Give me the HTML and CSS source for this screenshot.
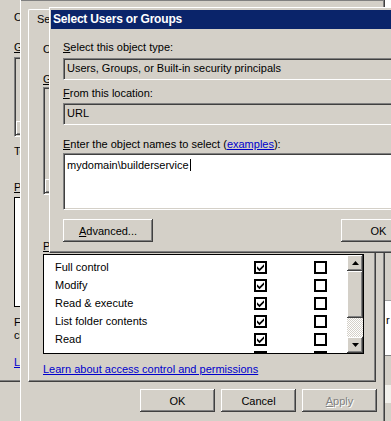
FILE: index.html
```html
<!DOCTYPE html>
<html lang="en">
<head>
    <meta charset="UTF-8">
    <title>Select Users or Groups</title>
    <link rel="stylesheet" href="styles.css">
</head>
<body>
    <div class="desktop">
        <!-- Back properties window -->
        <div class="win win-back">
            <div class="back-main">
                <div class="panel back-panel">
                    <p class="line">Object name:&nbsp; C:\Builds</p>
                    <p class="line grp-label"><u>G</u>roup or user names:</p>
                    <div class="grp-list back-grp">
                        <div class="hscroll"><span class="raised hbtn"></span></div>
                    </div>
                    <p class="line back-note">To change permissions, click Edit.</p>
                    <p class="line back-perm-label"><u>P</u>ermissions for Administrators</p>
                    <div class="perm-list back-perm"></div>
                    <p class="line back-adv">For special permissions or advanced settings,<br>click Advanced.</p>
                    <a class="link back-link" href="#">Learn about access control and permissions</a>
                </div>
            </div>
            <div class="back-edge">
                <div class="edge-field"></div>
                <div class="edge-box">r</div>
                <div class="edge-pale"></div>
            </div>
        </div>

        <!-- Folder properties window, Security tab -->
        <div class="win win-mid">
            <div class="mid-rule"></div>
            <div class="tabs"><div class="tab">Security</div></div>
            <div class="panel mid-panel">
                <p class="line">Object name:&nbsp; C:\Builds\Drop</p>
                <p class="line grp-label"><u>G</u>roup or user names:</p>
                <div class="grp-list mid-grp">
                    <div class="hscroll"><span class="raised hbtn"></span></div>
                </div>
                <p class="line perm-label"><u>P</u>ermissions for Administrators</p>
                <div class="perm-list">
                    <div class="perm-rows">
                        <div class="perm-row"><span>Full control</span><i class="cb on"><svg width="9" height="9" viewBox="0 0 9 9"><polygon points="1,3.2 3.5,5.7 8,1.2 8,3.7 3.5,8.2 1,5.7"/></svg></i><i class="cb"></i></div>
                        <div class="perm-row"><span>Modify</span><i class="cb on"><svg width="9" height="9" viewBox="0 0 9 9"><polygon points="1,3.2 3.5,5.7 8,1.2 8,3.7 3.5,8.2 1,5.7"/></svg></i><i class="cb"></i></div>
                        <div class="perm-row"><span>Read &amp; execute</span><i class="cb on"><svg width="9" height="9" viewBox="0 0 9 9"><polygon points="1,3.2 3.5,5.7 8,1.2 8,3.7 3.5,8.2 1,5.7"/></svg></i><i class="cb"></i></div>
                        <div class="perm-row"><span>List folder contents</span><i class="cb on"><svg width="9" height="9" viewBox="0 0 9 9"><polygon points="1,3.2 3.5,5.7 8,1.2 8,3.7 3.5,8.2 1,5.7"/></svg></i><i class="cb"></i></div>
                        <div class="perm-row"><span>Read</span><i class="cb on"><svg width="9" height="9" viewBox="0 0 9 9"><polygon points="1,3.2 3.5,5.7 8,1.2 8,3.7 3.5,8.2 1,5.7"/></svg></i><i class="cb"></i></div>
                        <div class="perm-row"><span>Write</span><i class="cb on"><svg width="9" height="9" viewBox="0 0 9 9"><polygon points="1,3.2 3.5,5.7 8,1.2 8,3.7 3.5,8.2 1,5.7"/></svg></i><i class="cb"></i></div>
                    </div>
                    <div class="vscroll">
                        <div class="raised sb-btn"><svg width="7" height="4" viewBox="0 0 7 4"><polygon points="3.5,0 7,4 0,4"/></svg></div>
                        <div class="raised sb-thumb"></div>
                        <div class="sb-track"></div>
                        <div class="raised sb-btn"><svg width="7" height="4" viewBox="0 0 7 4"><polygon points="0,0 7,0 3.5,4"/></svg></div>
                    </div>
                </div>
                <a class="link mid-link" href="#">Learn about access control and permissions</a>
            </div>
            <div class="buttons">
                <button class="btn">OK</button>
                <button class="btn">Cancel</button>
                <button class="btn" disabled><u>A</u>pply</button>
            </div>
        </div>

        <!-- Select Users or Groups dialog -->
        <div class="win win-dialog">
            <div class="titlebar">Select Users or Groups</div>
            <div class="dlg-body">
                <p class="line"><u>S</u>elect this object type:</p>
                <div class="field readonly type-field">Users, Groups, or Built-in security principals</div>
                <p class="line loc-label"><u>F</u>rom this location:</p>
                <div class="field readonly loc-field">URL</div>
                <p class="line names-label"><u>E</u>nter the object names to select (<a href="#">examples</a>):</p>
                <div class="field names">mydomain\builderservice<span class="caret"></span></div>
                <div class="dlg-buttons">
                    <button class="btn btn-wide"><u>A</u>dvanced...</button>
                    <button class="btn">OK</button>
                </div>
            </div>
        </div>
    </div>
</body>
</html>
```

FILE: styles.css
```css
/* General styles */
html, body {
    margin: 0;
    padding: 0;
}

body {
    width: 391px;
    height: 421px;
    overflow: hidden;
    background-color: #d4d0c8;
    font-family: "Liberation Sans", Arial, sans-serif;
    font-size: 11px;
    color: #000;
}

.desktop {
    position: relative;
    width: 391px;
    height: 421px;
    overflow: hidden;
}

.win {
    box-sizing: border-box;
    background-color: #d4d0c8;
}

.line {
    margin: 0;
    line-height: 13px;
    white-space: nowrap;
}

a {
    color: #0000cc;
    text-decoration: underline;
}

.link {
    display: block;
    line-height: 13px;
    white-space: nowrap;
}

/* 3D bevels */
.raised {
    background-color: #d4d0c8;
    box-shadow: inset -1px -1px #404040, inset 1px 1px #fff, inset -2px -2px #808080, inset 2px 2px #d4d0c8;
}

.btn {
    box-sizing: border-box;
    width: 75px;
    height: 23px;
    padding: 0;
    border: none;
    font: inherit;
    color: #000;
    background-color: #d4d0c8;
    box-shadow: inset -1px -1px #404040, inset 1px 1px #fff, inset -2px -2px #808080, inset 2px 2px #d4d0c8;
}

.btn:disabled {
    color: #808080;
    text-shadow: 1px 1px #fff;
}

.btn-wide {
    width: 90px;
}

.panel {
    box-sizing: border-box;
    border-left: 1px solid #fff;
    border-right: 1px solid #404040;
    border-bottom: 1px solid #404040;
    box-shadow: inset -1px -1px #808080;
}

/* Group list (mostly hidden) */
.grp-list {
    box-sizing: border-box;
    display: flex;
    flex-direction: column;
    width: 320px;
    border: 1px solid;
    border-color: #808080 #fff #fff #808080;
    box-shadow: inset 1px 1px #404040, inset -1px -1px #d4d0c8;
    background-color: #d4d0c8;
}

.hscroll {
    margin-top: auto;
    padding: 0 1px 1px 1px;
}

.hbtn {
    display: block;
    width: 16px;
    height: 14px;
}

/* Permission list */
.perm-list {
    box-sizing: border-box;
    display: flex;
    width: 321px;
    height: 100px;
    border: 1px solid #000;
    background-color: #fff;
}

.perm-rows {
    flex: 1;
    padding-top: 3px;
    overflow: hidden;
}

.perm-row {
    display: grid;
    grid-template-columns: 199px 60px 1fr;
    align-items: center;
    height: 18px;
    padding-left: 11px;
    white-space: nowrap;
}

.cb {
    display: block;
    box-sizing: border-box;
    width: 13px;
    height: 13px;
    border: 2px solid #000;
    background-color: #fff;
}

.cb svg {
    display: block;
}

.vscroll {
    display: flex;
    flex-direction: column;
    width: 16px;
}

.sb-btn {
    display: flex;
    align-items: center;
    justify-content: center;
    height: 16px;
}

.sb-btn svg {
    display: block;
}

.sb-thumb {
    height: 47px;
}

.sb-track {
    flex: 1;
    background-color: #fff;
    background-image: repeating-conic-gradient(#d4d0c8 0 25%, #fff 0 50%);
    background-size: 2px 2px;
}

/* Back window */
.win-back {
    display: flex;
    width: 391px;
    height: 421px;
}

.back-main {
    width: 385px;
}

.back-panel {
    border-left: none;
    padding: 11px 0 12px 14px;
}

.back-panel .grp-label {
    margin-top: 17px;
}

.back-grp {
    margin-top: 3px;
    height: 80px;
}

.back-note {
    margin-top: 8px;
}

.back-perm-label {
    margin-top: 23px;
}

.back-perm {
    margin-top: 3px;
    height: 110px;
}

.back-adv {
    margin-top: 9px;
}

.back-link {
    margin-top: 14px;
}

.back-edge {
    flex: 1;
    display: flex;
    flex-direction: column;
}

.edge-field {
    height: 7px;
    background-color: #fff;
}

.edge-box {
    box-sizing: border-box;
    height: 56px;
    margin-top: 293px;
    padding: 13px 0 0 1px;
    line-height: 13px;
    background-color: #fff;
    border-top: 1px solid #a0a0a0;
    border-bottom: 1px solid #808080;
}

.edge-pale {
    height: 18px;
    margin-top: 29px;
    background-color: #f2f1ec;
}

/* Middle window */
.win-mid {
    position: absolute;
    left: 20px;
    top: 0;
    width: 365px;
    height: 440px;
    border-left: 1px solid #fff;
    border-right: 1px solid #404040;
    box-shadow: inset -1px 0 #808080;
}

.mid-rule {
    height: 1px;
    background-color: #808080;
}

.tabs {
    display: flex;
    margin: 8px 0 0 7px;
}

.tab {
    padding: 3px 8px 2px 8px;
    line-height: 13px;
    border-top: 1px solid #fff;
    border-left: 1px solid #fff;
    border-right: 1px solid #404040;
    border-radius: 2px 2px 0 0;
}

.mid-panel {
    width: 348px;
    margin-left: 7px;
    padding: 15px 0 5px 14px;
}

.mid-panel .grp-label {
    margin-top: 17px;
}

.mid-grp {
    margin-top: 1px;
    height: 108px;
}

.perm-label {
    margin-top: 45px;
}

.mid-panel .perm-list {
    margin-top: 1px;
}

.mid-link {
    margin-top: 9px;
}

.buttons {
    display: flex;
    justify-content: flex-end;
    gap: 6px;
    margin-top: 7px;
    padding-right: 7px;
}

/* Select Users or Groups dialog */
.win-dialog {
    position: absolute;
    left: 49px;
    top: 7px;
    width: 385px;
    padding: 2px 0 0 1px;
    border-top: 1px solid #fff;
    border-left: 1px solid #fff;
    border-bottom: 1px solid #404040;
    box-shadow: inset 0 -1px #808080;
}

.titlebar {
    height: 19px;
    padding-left: 2px;
    line-height: 19px;
    background-color: #0a246a;
    color: #fff;
    font-weight: bold;
    font-size: 12px;
    letter-spacing: -0.2px;
    white-space: nowrap;
}

.dlg-body {
    width: 353px;
    padding: 12px 13px 10px 12px;
}

.field {
    box-sizing: border-box;
    height: 22px;
    margin-top: 4px;
    padding: 3px 3px 0 3px;
    line-height: 13px;
    white-space: nowrap;
    border: 1px solid;
    border-color: #808080 #fff #fff #808080;
    box-shadow: inset 1px 1px #404040, inset -1px -1px #d4d0c8;
}

.readonly {
    background-color: #d4d0c8;
}

.loc-label {
    margin-top: 7px;
}

.loc-field {
    margin-top: 3px;
}

.names-label {
    margin-top: 13px;
}

.names {
    height: 57px;
    margin-top: 2px;
    padding-top: 5px;
    background-color: #fff;
}

.caret {
    display: inline-block;
    width: 1px;
    height: 12px;
    margin-left: 1px;
    vertical-align: -2px;
    background-color: #000;
}

.dlg-buttons {
    display: flex;
    justify-content: space-between;
    margin-top: 9px;
}
```
